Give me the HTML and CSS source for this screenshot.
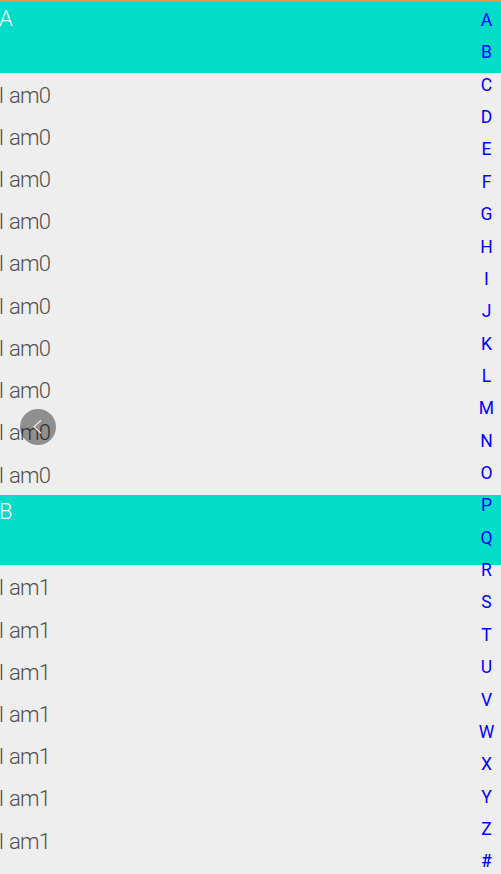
FILE: index.html
```html
<!DOCTYPE html>
<html lang="en">
<head>
<meta charset="utf-8">
<title>Contacts</title>
<link rel="stylesheet" href="styles.css">
</head>
<body>
<main class="list">
<h2 class="header">A</h2>
<ul class="rows"><li>I am0</li><li>I am0</li><li>I am0</li><li>I am0</li><li>I am0</li><li>I am0</li><li>I am0</li><li>I am0</li><li>I am0</li><li>I am0</li></ul>
<h2 class="header">B</h2>
<ul class="rows"><li>I am1</li><li>I am1</li><li>I am1</li><li>I am1</li><li>I am1</li><li>I am1</li><li>I am1</li></ul>
</main>
<nav class="index"><span>A</span><span>B</span><span>C</span><span>D</span><span>E</span><span>F</span><span>G</span><span>H</span><span>I</span><span>J</span><span>K</span><span>L</span><span>M</span><span>N</span><span>O</span><span>P</span><span>Q</span><span>R</span><span>S</span><span>T</span><span>U</span><span>V</span><span>W</span><span>X</span><span>Y</span><span>Z</span><span class="hash">#</span></nav>
<div class="back"><svg viewBox="0 0 36 36"><path d="M21 11.3 14 17.8l7 6.5"/></svg></div>
</body>
</html>
```

FILE: styles.css
```css
* { box-sizing: border-box; margin: 0; padding: 0; }
body {
  position: relative;
  height: 874px;
  overflow: hidden;
  background: #eeeeee;
  font-family: Roboto, sans-serif;
}
.list { border-top: 2px solid #e39a35; }
.header {
  height: 70.6px;
  padding-top: 3px;
  background: #03dcc8;
  color: #fff;
  font-size: 22px;
  font-weight: 300;
  line-height: 28px;
  text-indent: -1px;
}
.rows { list-style: none; }
.rows li {
  height: 42.23px;
  font-weight: 300;
  font-size: 22px;
  line-height: 46.4px;
  letter-spacing: -.85px;
  word-spacing: 1px;
  text-indent: -1.5px;
  color: #505050;
}
.index {
  position: absolute;
  top: 4px;
  right: 0;
  width: 29px;
  display: flex;
  flex-direction: column;
  color: #0000ff;
  font-size: 17.5px;
  font-weight: 400;
  text-align: center;
}
.index span { height: 32.37px; line-height: 33px; }
.index .hash { font-weight: 500; }
.back {
  position: absolute;
  left: 20px;
  top: 409px;
  width: 36px;
  height: 36px;
  border-radius: 50%;
  background: rgba(0, 0, 0, .4);
}
.back svg { display: block; fill: none; stroke: #e8e8e8; stroke-width: 1.3; }
```
